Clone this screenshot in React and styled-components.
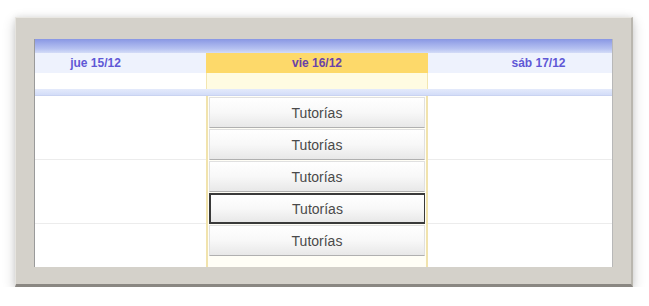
import React from 'react';
import styled, { createGlobalStyle } from 'styled-components';

const GlobalStyle = createGlobalStyle`
    html, body {
        margin: 0;
        padding: 0;
        background: #ffffff;
        font-family: 'Liberation Sans', Arial, sans-serif;
    }
`;

const Frame = styled.div`
    margin: 17px 0 0 15px;
    width: 618px;
    height: 270px;
    box-sizing: border-box;
    padding: 21px 18px 17px 18px;
    background: #d4d1ca;
    border-top: 1px solid #e9e7e2;
    border-left: 1px solid #e6e4df;
    border-right: 2px solid #b9b6ae;
    border-bottom: 3px solid #8a8782;
    box-shadow: 0 4px 12px rgba(0, 0, 0, 0.2), 0 0 6px rgba(0, 0, 0, 0.08);
`;

const Viewport = styled.div`
    height: 100%;
    overflow: hidden;
    background: #ffffff;
    border-left: 1px solid #9a9a9a;
    border-right: 1px solid #b8b8b8;
    display: flex;
    flex-direction: column;
`;

const TopBand = styled.div`
    height: 14px;
    flex-shrink: 0;
    background: linear-gradient(#8997e4, #b6c2f1 70%, #d4dcf7);
`;

const Track = styled.div`
    display: grid;
    grid-template-columns: 221px 222px 221px;
    margin-left: -50px;
`;

const DayLabel = styled.div`
    height: 20px;
    line-height: 20px;
    text-align: center;
    font-size: 12px;
    font-weight: bold;
    color: ${p => (p.$today ? '#6a42a8' : '#5f58d6')};
    background: ${p => (p.$today ? '#fdd96a' : '#eef2fd')};
`;

const SubHeader = styled.div`
    height: 16px;
    background: ${p => (p.$today ? '#fffbe2' : '#ffffff')};
    border-left: ${p => (p.$today ? '1px solid #f3e6b0' : 'none')};
    border-right: ${p => (p.$today ? '1px solid #f3e6b0' : 'none')};
`;

const BlueStrip = styled.div`
    height: 6px;
    flex-shrink: 0;
    background: linear-gradient(#e4eafb, #d3ddf8);
    border-bottom: 1px solid #c9d3f1;
`;

const Body = styled(Track)`
    flex: 1;
`;

const SideColumn = styled.div`
    display: flex;
    flex-direction: column;
`;

const HourSlot = styled.div`
    height: 64px;
    flex-shrink: 0;
    border-bottom: 1px solid #ececec;
    box-sizing: border-box;
`;

const TodayColumn = styled.div`
    display: flex;
    flex-direction: column;
    gap: 1px;
    padding: 1px 1px 0;
    background: #fffef6;
    border-left: 2px solid #f1e3ad;
    border-right: 2px solid #f1e3ad;
`;

const SlotButton = styled.button`
    height: 31px;
    flex-shrink: 0;
    padding: 0;
    font-family: 'Liberation Sans', Arial, sans-serif;
    font-size: 14px;
    color: #4a4a4a;
    background: linear-gradient(#ffffff, #f8f8f8 50%, #e8e8e8);
    border: 1px solid ${p => (p.$focused ? '#3a3a3a' : '#e0e0e0')};
    border-bottom-color: ${p => (p.$focused ? '#3a3a3a' : '#b0b0b0')};
    border-width: ${p => (p.$focused ? '2px 1px 2px 2px' : '1px')};
`;

const slots = [false, false, false, true, false];

export default function App() {
    return (
        <>
            <GlobalStyle />
            <Frame>
                <Viewport>
                    <TopBand />
                    <Track>
                        <DayLabel>jue 15/12</DayLabel>
                        <DayLabel $today>vie 16/12</DayLabel>
                        <DayLabel>sáb 17/12</DayLabel>
                        <SubHeader />
                        <SubHeader $today />
                        <SubHeader />
                    </Track>
                    <BlueStrip />
                    <Body>
                        <SideColumn>
                            <HourSlot />
                            <HourSlot />
                            <HourSlot />
                        </SideColumn>
                        <TodayColumn>
                            {slots.map((focused, i) => (
                                <SlotButton key={i} $focused={focused}>Tutorías</SlotButton>
                            ))}
                        </TodayColumn>
                        <SideColumn>
                            <HourSlot />
                            <HourSlot />
                            <HourSlot />
                        </SideColumn>
                    </Body>
                </Viewport>
            </Frame>
        </>
    );
}
